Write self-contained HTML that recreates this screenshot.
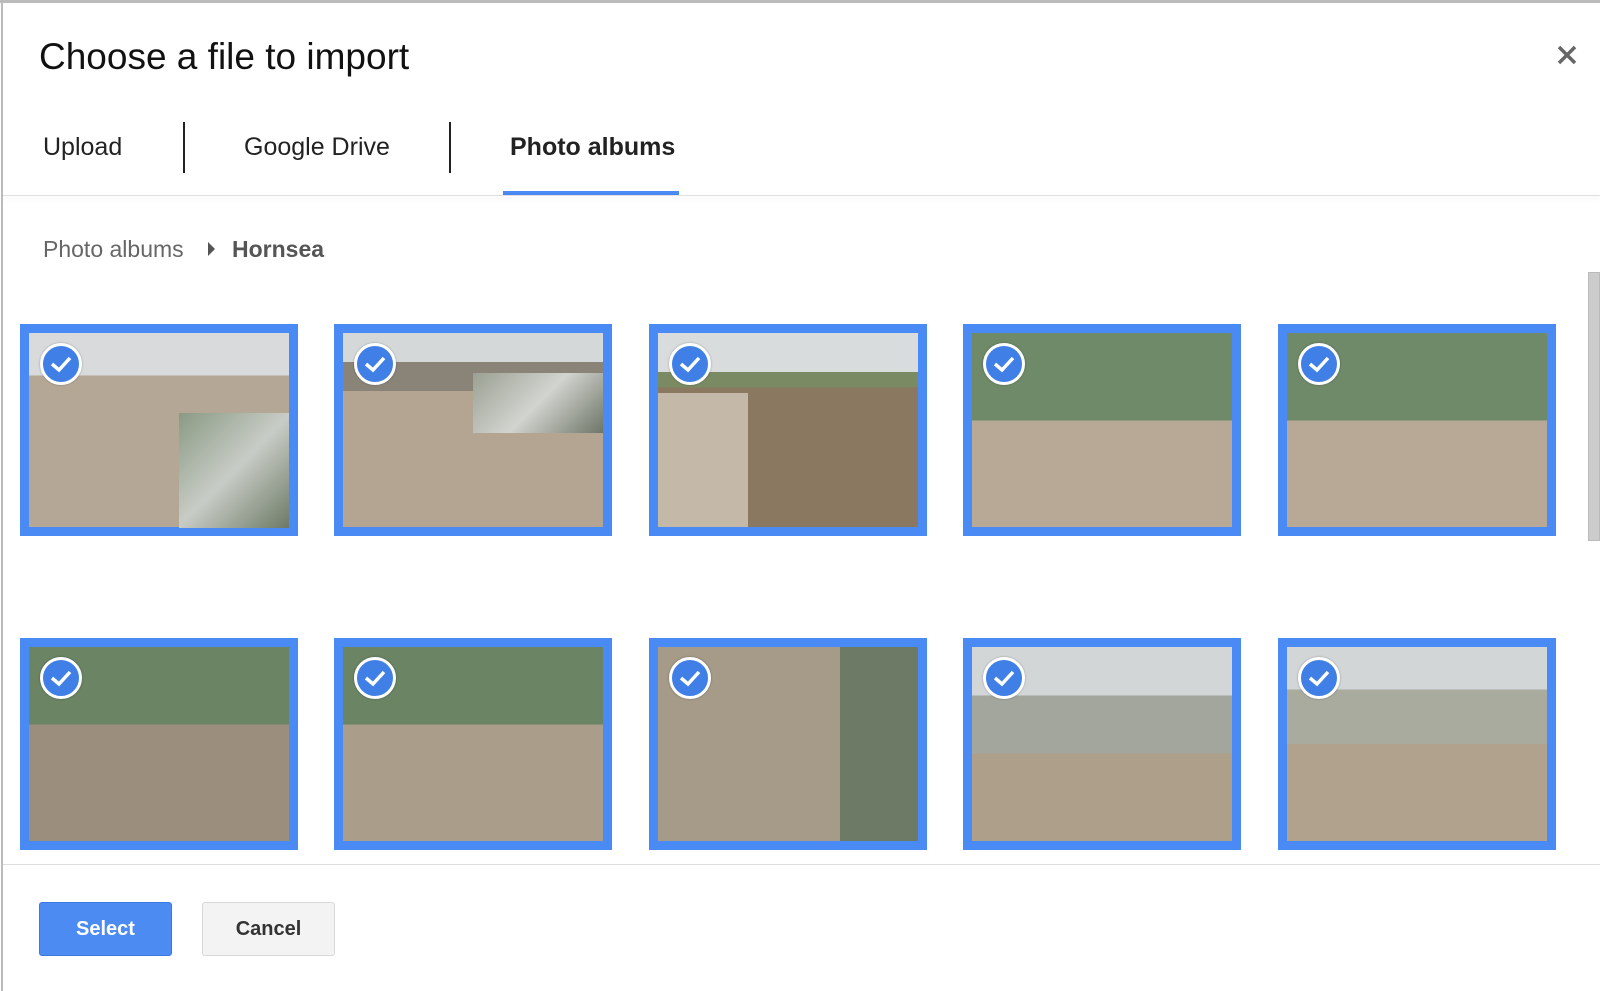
<!DOCTYPE html>
<html><head><meta charset="utf-8"><style>
*{margin:0;padding:0;box-sizing:border-box}
body{width:1600px;height:991px;background:#fff;font-family:"Liberation Sans",Arial,sans-serif;position:relative;overflow:hidden}
.abs{position:absolute}
.title{left:39px;top:36px;font-size:37px;color:#111;white-space:nowrap}
.tab{top:133px;font-size:25px;color:#222;white-space:nowrap}
.sep{top:122px;width:2px;height:51px;background:#222}
.tile{position:absolute;width:278px;height:212px;border:9px solid #4a8af4;background:#999}
.chk{position:absolute;left:11px;top:10px;width:42px;height:42px;border-radius:50%;background:#3f7fe6;border:3px solid #fff;box-shadow:0 0 2px rgba(0,0,0,.3)}
.chk svg{position:absolute;left:6px;top:7px}
</style></head><body>
<div class="abs" style="left:0;top:0;width:1600px;height:3px;background:#bbb"></div>
<div class="abs" style="left:1px;top:0;width:2px;height:991px;background:#bbb"></div>
<div class="abs title">Choose a file to import</div>
<div class="abs" style="left:1554px;top:42px;width:26px;height:26px">
<svg width="26" height="26"><path d="M5 5L21 21M21 5L5 21" stroke="#666" stroke-width="3.5"/></svg></div>
<div class="abs tab" style="left:43px">Upload</div>
<div class="abs sep" style="left:183px"></div>
<div class="abs tab" style="left:244px">Google Drive</div>
<div class="abs sep" style="left:449px"></div>
<div class="abs tab" style="left:510px;font-weight:bold">Photo albums</div>
<div class="abs" style="left:503px;top:191px;width:176px;height:4px;background:#4a8af4"></div>
<div class="abs" style="left:3px;top:195px;width:1597px;height:1px;background:#e0e0e0;box-shadow:0 2px 6px rgba(0,0,0,.12)"></div>
<div class="abs" style="left:43px;top:236px;font-size:23px;color:#666;white-space:nowrap">Photo albums</div>
<div class="abs" style="left:208px;top:242px;width:0;height:0;border-left:7px solid #555;border-top:7px solid transparent;border-bottom:7px solid transparent"></div>
<div class="abs" style="left:232px;top:236px;font-size:23px;color:#555;font-weight:bold">Hornsea</div>
<div class="abs" style="left:1588px;top:272px;width:12px;height:269px;background:#ccc;border:1px solid #bbb"></div>

<div class="tile" style="left:20px;top:324px;background:linear-gradient(180deg,#d8dadb 0 22%,#b5a795 22% 100%)"><div class="abs" style="left:150px;top:80px;width:110px;height:115px;background:linear-gradient(135deg,#8a9a84,#c8ccc6 50%,#6d7a66)"></div><div class="chk"><svg width="24" height="22"><path d="M3 11L10 17L21 5" stroke="#fff" stroke-width="3.5" fill="none"/></svg></div></div>
<div class="tile" style="left:334px;top:324px;background:linear-gradient(180deg,#d5d8d9 0 15%,#8a8478 15% 30%,#b3a592 30% 100%)"><div class="abs" style="left:130px;top:40px;width:130px;height:60px;background:linear-gradient(135deg,#9aa093,#d2d4cf,#6e7567)"></div><div class="chk"><svg width="24" height="22"><path d="M3 11L10 17L21 5" stroke="#fff" stroke-width="3.5" fill="none"/></svg></div></div>
<div class="tile" style="left:649px;top:324px;background:linear-gradient(180deg,#d9dcdd 0 20%,#7a8a62 20% 28%,#8b7860 28% 100%)"><div class="abs" style="left:0;top:60px;width:90px;height:134px;background:#c4b8a8"></div><div class="chk"><svg width="24" height="22"><path d="M3 11L10 17L21 5" stroke="#fff" stroke-width="3.5" fill="none"/></svg></div></div>
<div class="tile" style="left:963px;top:324px;background:linear-gradient(180deg,#6f8a68 0 45%,#b7a996 45% 100%)"><div class="chk"><svg width="24" height="22"><path d="M3 11L10 17L21 5" stroke="#fff" stroke-width="3.5" fill="none"/></svg></div></div>
<div class="tile" style="left:1278px;top:324px;background:linear-gradient(180deg,#6f8a68 0 45%,#b7a996 45% 100%)"><div class="chk"><svg width="24" height="22"><path d="M3 11L10 17L21 5" stroke="#fff" stroke-width="3.5" fill="none"/></svg></div></div>

<div class="tile" style="left:20px;top:638px;background:linear-gradient(180deg,#6a8464 0 40%,#9c8e7c 40% 100%)"><div class="chk"><svg width="24" height="22"><path d="M3 11L10 17L21 5" stroke="#fff" stroke-width="3.5" fill="none"/></svg></div></div>
<div class="tile" style="left:334px;top:638px;background:linear-gradient(180deg,#6a8464 0 40%,#aa9d8a 40% 100%)"><div class="chk"><svg width="24" height="22"><path d="M3 11L10 17L21 5" stroke="#fff" stroke-width="3.5" fill="none"/></svg></div></div>
<div class="tile" style="left:649px;top:638px;background:linear-gradient(90deg,#a69a88 0 70%,#6c7a66 70% 100%)"><div class="chk"><svg width="24" height="22"><path d="M3 11L10 17L21 5" stroke="#fff" stroke-width="3.5" fill="none"/></svg></div></div>
<div class="tile" style="left:963px;top:638px;background:linear-gradient(180deg,#d3d6d7 0 25%,#a2a69c 25% 55%,#ae9f8b 55% 100%)"><div class="chk"><svg width="24" height="22"><path d="M3 11L10 17L21 5" stroke="#fff" stroke-width="3.5" fill="none"/></svg></div></div>
<div class="tile" style="left:1278px;top:638px;background:linear-gradient(180deg,#d3d6d7 0 22%,#a9ab9f 22% 50%,#b1a28e 50% 100%)"><div class="chk"><svg width="24" height="22"><path d="M3 11L10 17L21 5" stroke="#fff" stroke-width="3.5" fill="none"/></svg></div></div>

<div class="abs" style="left:3px;top:864px;width:1597px;height:1px;background:#ddd"></div>
<div class="abs" style="left:39px;top:902px;width:133px;height:54px;background:#4c8cf2;border:1px solid #3b78e0;border-radius:3px;color:#fff;font-weight:bold;font-size:20px;line-height:52px;text-align:center">Select</div>
<div class="abs" style="left:202px;top:902px;width:133px;height:54px;background:#f3f3f3;border:1px solid #d8d8d8;border-radius:3px;color:#333;font-weight:bold;font-size:20px;line-height:52px;text-align:center">Cancel</div>
</body></html>
